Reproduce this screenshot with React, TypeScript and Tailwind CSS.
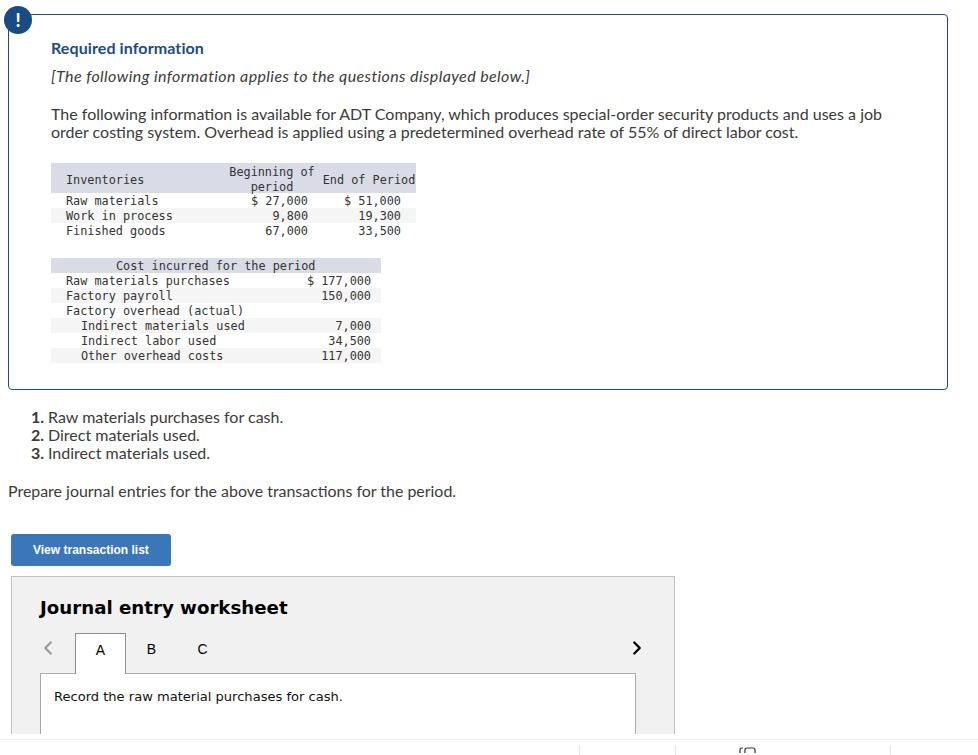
import React from 'react';
import { ChevronLeft, ChevronRight } from 'lucide-react';

const BODY = "font-['Lato','Liberation_Sans',sans-serif]";

const INVENTORIES = [
  { name: 'Raw materials', begin: '$ 27,000', end: '$ 51,000' },
  { name: 'Work in process', begin: '9,800', end: '19,300' },
  { name: 'Finished goods', begin: '67,000', end: '33,500' },
];

const COSTS = [
  { name: 'Raw materials purchases', value: '$ 177,000' },
  { name: 'Factory payroll', value: '150,000' },
  { name: 'Factory overhead (actual)', value: '' },
  { name: 'Indirect materials used', value: '7,000', indent: true },
  { name: 'Indirect labor used', value: '34,500', indent: true },
  { name: 'Other overhead costs', value: '117,000', indent: true },
];

const STEPS = ['Raw materials purchases for cash.', 'Direct materials used.', 'Indirect materials used.'];

function InventoryTable() {
  return (
    <div className="w-[365px] font-['DejaVu_Sans_Mono',monospace] text-[11.83px] leading-[15px] text-[#333]">
      <div className="grid grid-cols-[171px_100px_94px] items-center h-[30px] pt-[2px] bg-[#d9dce6]">
        <div className="pl-[15px]">Inventories</div>
        <div className="text-center">Beginning of<br />period</div>
        <div className="text-center whitespace-nowrap">End of Period</div>
      </div>
      {INVENTORIES.map((row, i) => (
        <div key={row.name} className={`grid grid-cols-[171px_100px_94px] h-[15px] pt-px ${i === 1 ? 'bg-[#f5f5f5]' : ''}`}>
          <div className="pl-[15px]">{row.name}</div>
          <div className="text-right pr-[14px]">{row.begin}</div>
          <div className="text-right pr-[15px]">{row.end}</div>
        </div>
      ))}
    </div>
  );
}

function CostTable() {
  return (
    <div className="w-[330px] mt-[20px] font-['DejaVu_Sans_Mono',monospace] text-[11.83px] leading-[15px] text-[#333]">
      <div className="h-[15px] pt-px bg-[#d9dce6] pl-[65px]">Cost incurred for the period</div>
      {COSTS.map((row, i) => (
        <div key={row.name} className={`flex justify-between h-[15px] pt-px pr-[10px] ${i % 2 === 1 ? 'bg-[#f5f5f5]' : ''}`}>
          <div className={row.indent ? 'pl-[30px]' : 'pl-[15px]'}>{row.name}</div>
          <div>{row.value}</div>
        </div>
      ))}
    </div>
  );
}

function Worksheet() {
  return (
    <div className="ml-[11px] mt-[10px] w-[664px] h-[158px] overflow-hidden border border-b-0 border-[#c0c0c0] bg-[#f1f1f1] pl-[28px] pr-[38px]">
      <h2 className="mt-[18px] font-['DejaVu_Sans',sans-serif] font-bold text-[18.2px] leading-[26px] text-black">
        Journal entry worksheet
      </h2>
      <div className="mt-[12px] flex items-end h-[41px] relative">
        <ChevronLeft size={22} strokeWidth={2.5} className="absolute left-[-3px] top-[4px] text-[#999]" />
        <div className="ml-[35px] w-[51px] h-[41px] relative z-10 bg-white border border-b-0 border-[#8c8c8c] flex items-start justify-center pt-[7px] font-['Liberation_Sans',sans-serif] text-[14px] leading-[18px] text-black">
          A
        </div>
        <div className="w-[51px] h-[41px] flex items-start justify-center pt-[7px] font-['Liberation_Sans',sans-serif] text-[14px] leading-[18px] text-black">B</div>
        <div className="w-[51px] h-[41px] flex items-start justify-center pt-[7px] font-['Liberation_Sans',sans-serif] text-[14px] leading-[18px] text-black">C</div>
        <ChevronRight size={22} strokeWidth={2.5} className="absolute left-[586px] top-[4px] text-black" />
      </div>
      <div className="-mt-px h-[70px] bg-white border border-b-0 border-[#aaaaaa] pl-[13px] pt-[14px] font-['DejaVu_Sans',sans-serif] text-[13.05px] leading-[17px] text-[#111]">
        Record the raw material purchases for cash.
      </div>
    </div>
  );
}

export default function App() {
  return (
    <div className={`w-[978px] h-[755px] overflow-hidden bg-white relative ${BODY}`}>
      <div className="h-[734px] overflow-hidden pt-[14px]">
        {/* Required information box */}
        <div className="relative ml-[8px] w-[940px] h-[376px] border border-[#1a4b85] rounded-[4px] pl-[42px] pt-[23px] text-[#3a3a3a]">
          <div className="absolute left-[-5px] top-[-9px] w-[28px] h-[28px] rounded-full bg-[#1a4b85] flex items-center justify-center text-white font-black text-[18px] leading-none">
            !
          </div>
          <h3 className="font-bold text-[16px] tracking-[0.1px] leading-[20px] text-[#1a4b85]">Required information</h3>
          <p className="mt-[8px] italic text-[16px] tracking-[0.4px] leading-[20px]">[The following information applies to the questions displayed below.]</p>
          <p className="mt-[19px] w-[860px] text-[16px] leading-[18px]">
            The following information is available for ADT Company, which produces special-order security products and uses a job order costing system. Overhead is applied using a predetermined overhead rate of 55% of direct labor cost.
          </p>
          <div className="mt-[22px]">
            <InventoryTable />
            <CostTable />
          </div>
        </div>

        {/* Steps */}
        <ol className="mt-[18px] ml-[8px] text-[16px] leading-[18px] text-[#3a3a3a]">
          {STEPS.map((step, i) => (
            <li key={step} className="flex">
              <span className="w-[36px] text-right font-bold">{i + 1}.</span>
              <span className="ml-[4px]">{step}</span>
            </li>
          ))}
        </ol>
        <p className="mt-[20px] ml-[8px] text-[15.93px] leading-[18px] text-[#3a3a3a]">
          Prepare journal entries for the above transactions for the period.
        </p>

        <button className="mt-[34px] ml-[11px] block w-[160px] h-[32px] rounded-[3px] bg-[#3b76ba] font-['Liberation_Sans',sans-serif] font-bold text-[12px] text-white text-left pl-[22px]">
          View transaction list
        </button>

        <Worksheet />
      </div>

      {/* Bottom bar */}
      <div className="mt-[5px] h-[16px] border-t border-[#eeeeee] pt-[5px] pl-[579px] flex">
        <div className="w-[96px] h-[10px] border-l border-[#e5e5e5]" />
        <div className="w-[215px] h-[10px] border-l border-[#e5e5e5] relative">
          <svg viewBox="0 0 18 6" className="absolute left-[63px] top-[2px] w-[18px] h-[6px]" fill="none" stroke="#333" strokeWidth="1.2">
            <path d="M1 6V3q0-2 2-2h1M6 6V3q0-2 2-2h6q2 0 2 2v3" />
          </svg>
        </div>
        <div className="w-[88px] h-[10px] border-l border-[#e5e5e5]" />
      </div>
    </div>
  );
}
